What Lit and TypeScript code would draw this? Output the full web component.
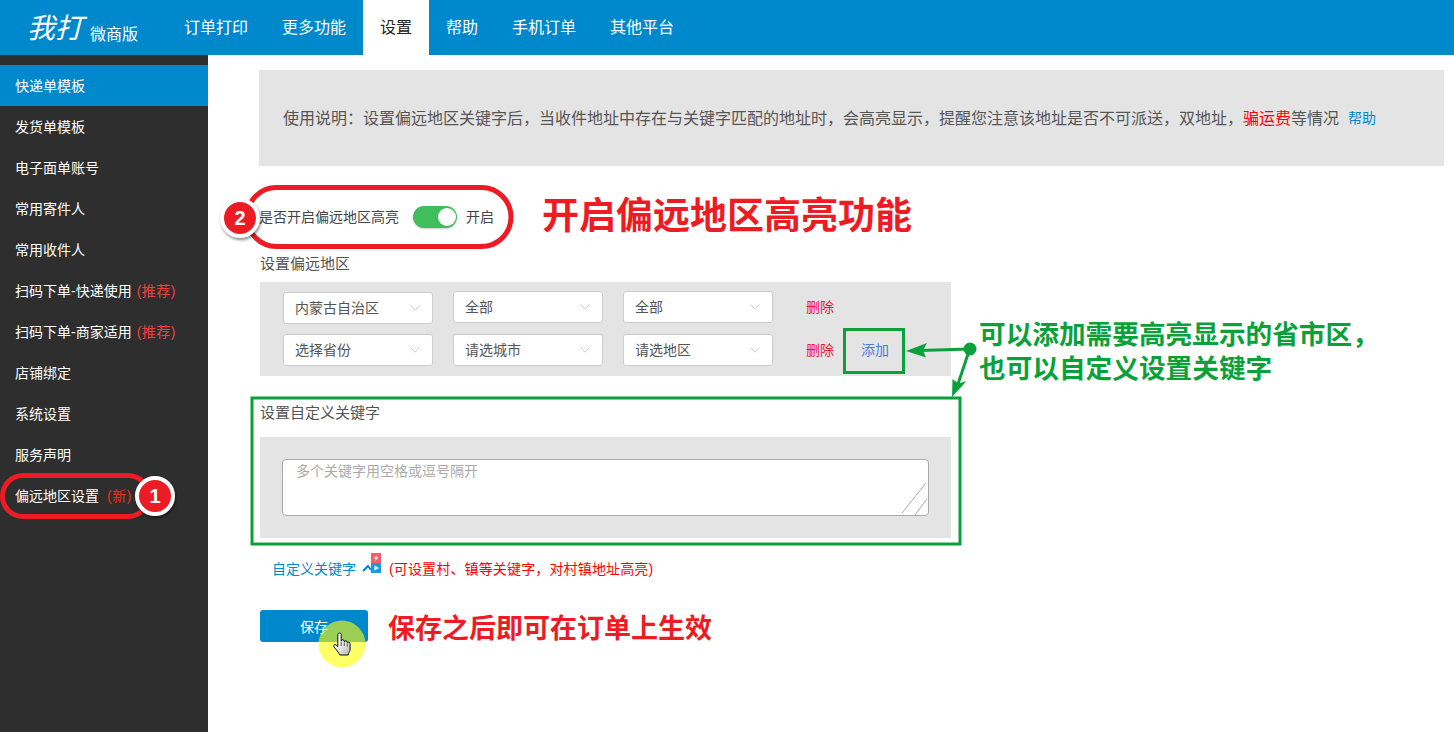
import { LitElement, css, html, svg } from "lit";
import { customElement } from "lit/decorators.js";

const NAV = ["订单打印", "更多功能", "设置", "帮助", "手机订单", "其他平台"];

const MENU = [
  { label: "快递单模板", active: true },
  { label: "发货单模板" },
  { label: "电子面单账号" },
  { label: "常用寄件人" },
  { label: "常用收件人" },
  { label: "扫码下单-快递使用", tag: "(推荐)" },
  { label: "扫码下单-商家适用", tag: "(推荐)" },
  { label: "店铺绑定" },
  { label: "系统设置" },
  { label: "服务声明" },
  { label: "偏远地区设置", isNew: "(新)" },
];

// full-width punctuation, the reference text uses these cells
const NOTICE_HEAD =
  "使用说明\uFF1A设置偏远地区关键字后\uFF0C当收件地址中存在与关键字匹配的地址时\uFF0C会高亮显示\uFF0C提醒您注意该地址是否不可派送\uFF0C双地址\uFF0C";
const RANGE_HINT = "(可设置村、镇等关键字\uFF0C对村镇地址高亮)";
const GREEN_LINE = "可以添加需要高亮显示的省市区\uFF0C";

const chevron = html`<svg class="chevron" width="10" height="6" viewBox="0 0 10 6">
  <path d="M0.5 0.5 L5 5.2 L9.5 0.5" fill="none" stroke="#ccc" stroke-width="1" />
</svg>`;

const marks = svg`
  <rect x="2.5" y="475.5" width="146" height="41" rx="20.5" fill="none" stroke="#ed1c24" stroke-width="5" />
  <rect x="247" y="187.5" width="264" height="59" rx="29.5" fill="none" stroke="#ed1c24" stroke-width="5" />
  <rect x="844.5" y="329.5" width="59" height="43" fill="none" stroke="#0ba13a" stroke-width="3" />
  <rect x="252" y="398" width="708" height="146" fill="none" stroke="#0ba13a" stroke-width="3" />
  <circle cx="970" cy="349" r="6.5" fill="#0ba13a" />
  <line x1="970" y1="349" x2="920" y2="350.5" stroke="#0ba13a" stroke-width="3" />
  <path d="M906 351 L927 343 L923 350.5 L926 357.5 Z" fill="#0ba13a" />
  <line x1="968" y1="354" x2="958" y2="384" stroke="#0ba13a" stroke-width="3" />
  <path d="M952 397 L952.5 379 L958.5 383.5 L966.5 381 Z" fill="#0ba13a" />
  <circle cx="342" cy="644" r="23.5" fill="rgba(255,255,0,0.6)" />
  <defs>
    <linearGradient id="hand" x1="0" y1="0" x2="1" y2="1">
      <stop offset="0.3" stop-color="#fff" />
      <stop offset="1" stop-color="#b5b5b5" />
    </linearGradient>
  </defs>
  <path
    d="M337.8 635c0-2.6 3.4-2.6 3.4 0v6.2c.2-1.9 3-1.9 3.1 0v.8c.3-1.7 2.9-1.6 3 .2v.8c.4-1.4 2.8-1.1 2.8.7v5.3c0 2-.8 3-1.6 4.5l-.3 1.5h-8.4l-.8-1.5c-1.5-2.5-3.4-4.7-5-6.6-1.2-1.5.6-3 2-2l1.8 1.6z"
    fill="url(#hand)"
    stroke="#111"
    stroke-width="1"
  />
  <path d="M341.2 642v4M344.3 642.5v3.5M347.3 643.5v3" stroke="#333" stroke-width="0.8" fill="none" />
`;

@customElement("app-root")
export class AppRoot extends LitElement {
  static styles = css`
    :host {
      display: block;
      position: relative;
      width: 1454px;
      height: 732px;
      overflow: hidden;
      background: #fff;
      color: #555;
      font-family: "Liberation Sans", "Noto Sans CJK SC", sans-serif;
      font-size: 14px;
      line-height: 20px;
    }

    .top {
      display: flex;
      height: 55px;
      background: #0088cc;
      color: #fff;
    }
    .logo {
      display: flex;
      align-items: flex-start;
      width: 140px;
      padding: 10px 0 0 27px;
    }
    .logo b {
      margin-top: 1px;
      font-size: 28px;
      line-height: 36px;
      font-weight: 400;
      font-style: italic;
    }
    .logo span {
      margin: 15px 0 0 7px;
      font-size: 16px;
    }
    .top a {
      padding: 0 17px;
      font-size: 16px;
      line-height: 55px;
    }
    .top a.on {
      background: #fff;
      color: #222;
    }

    .body {
      display: flex;
      height: 677px;
    }
    .side {
      flex: none;
      width: 208px;
      padding-top: 10px;
      box-sizing: border-box;
      background: #2e2e2e;
      color: #fff;
    }
    .side div {
      height: 40px;
      padding: 1px 0 0 15px;
      line-height: 41px;
      white-space: nowrap;
    }
    .side div.on {
      background: #0088cc;
    }
    .side .tag {
      margin-left: 5px;
      color: #ee4040;
      letter-spacing: 0.5px;
    }
    .side .new {
      margin-left: 8px;
      color: #e8301c;
      letter-spacing: 0.6px;
    }

    .main {
      flex: 1;
      padding: 15px 10px 0 52px;
    }
    .notice {
      display: flex;
      align-items: center;
      height: 94px;
      margin-left: -1px;
      padding: 2px 0 0 24px;
      background: #e4e4e4;
      font-size: 16px;
      white-space: nowrap;
    }
    .notice em {
      font-style: normal;
      color: #f00;
    }
    .notice a {
      margin: -2px 0 0 9px;
      color: #0088cc;
      font-size: 14px;
    }

    .switch-row {
      display: flex;
      align-items: center;
      height: 32px;
      margin: 35px 0 0 -1px;
      color: #444;
    }
    .switch {
      position: relative;
      width: 44px;
      height: 22px;
      margin: 0 9px 0 14px;
      border-radius: 11px;
      background: #40be5c;
      box-shadow: 0 1px 2px rgba(0, 0, 0, 0.2);
    }
    .switch i {
      position: absolute;
      top: 2px;
      right: 1px;
      width: 18px;
      height: 18px;
      border-radius: 50%;
      background: #fff;
    }

    .heading {
      font-size: 15px;
    }
    .h1 {
      margin-top: 21px;
    }
    .h2 {
      margin-top: 27px;
    }

    .regions {
      display: flex;
      flex-direction: column;
      gap: 11px;
      width: 691px;
      height: 94px;
      margin-top: 8px;
      padding: 9px 0 0 23px;
      box-sizing: border-box;
      background: #e4e4e4;
    }
    .region {
      display: flex;
      align-items: flex-start;
      gap: 20px;
      height: 32px;
    }
    .select {
      display: flex;
      align-items: center;
      justify-content: space-between;
      width: 150px;
      height: 32px;
      padding: 0 12px 0 11px;
      box-sizing: border-box;
      border: 1px solid #ccc;
      border-radius: 3px;
      background: #fff;
    }
    .select.low {
      margin-top: 1px;
    }
    .chevron {
      flex: none;
    }
    .del {
      align-self: center;
      margin-left: 13px;
      color: #f0103c;
    }
    .add {
      align-self: center;
      margin-left: 7px;
      color: #4a80d4;
    }

    .keywords {
      width: 691px;
      height: 101px;
      margin-top: 14px;
      padding: 22px 22px 0;
      box-sizing: border-box;
      background: #e4e4e4;
    }
    .area {
      position: relative;
      height: 57px;
    }
    textarea {
      display: block;
      width: 100%;
      height: 100%;
      padding: 1px 13px;
      box-sizing: border-box;
      border: 1px solid #aaa;
      border-radius: 4px;
      background: #fff;
      color: #555;
      font: inherit;
      resize: none;
      outline: none;
    }
    textarea::placeholder {
      color: #aaa;
    }
    .grip {
      position: absolute;
      right: 0;
      bottom: 0;
    }

    .link-row {
      display: flex;
      align-items: center;
      height: 20px;
      margin-top: 21px;
      padding-left: 12px;
      white-space: nowrap;
    }
    .link-row a {
      color: #0088cc;
    }
    .link-row svg {
      flex: none;
      margin: -12px 7px 0 6px;
    }
    .link-row span {
      color: #f00;
      letter-spacing: 0.15px;
    }

    .save-row {
      display: flex;
      align-items: flex-start;
      margin-top: 31px;
    }
    .save {
      width: 108px;
      height: 31px;
      padding-top: 1px;
      border-radius: 3px;
      background: #0088cc;
      color: #fff;
      text-align: center;
      line-height: 32px;
    }
    .save-row strong {
      margin-left: 20px;
      color: #ed1c24;
      font-size: 27px;
      line-height: 38px;
      white-space: nowrap;
    }

    .marks {
      position: absolute;
      top: 0;
      left: 0;
      pointer-events: none;
    }
    .badge {
      position: absolute;
      width: 32px;
      height: 32px;
      border: 4px solid #fff;
      border-radius: 50%;
      background: #ed1c24;
      color: #fff;
      box-shadow: 1px 2px 3px rgba(0, 0, 0, 0.45);
      font-size: 20px;
      font-weight: 700;
      line-height: 32px;
      text-align: center;
    }
    .b1 {
      left: 135px;
      top: 476px;
    }
    .b2 {
      left: 220px;
      top: 198px;
    }
    .note {
      position: absolute;
      font-weight: 700;
      white-space: nowrap;
    }
    .note-red {
      left: 542px;
      top: 194px;
      color: #ed1c24;
      font-size: 37px;
      line-height: 46px;
    }
    .note-green {
      left: 979px;
      top: 318px;
      color: #0ba13a;
      font-size: 26.67px;
      line-height: 34px;
    }
  `;

  render() {
    return html`
      <header class="top">
        <div class="logo"><b>我打</b><span>微商版</span></div>
        ${NAV.map((n) => html`<a class=${n === "设置" ? "on" : ""}>${n}</a>`)}
      </header>
      <div class="body">
        <nav class="side">
          ${MENU.map(
            (m) => html`<div class=${m.active ? "on" : ""}>
              ${m.label}${m.tag ? html`<span class="tag">${m.tag}</span>` : ""}${m.isNew
                ? html`<span class="new">${m.isNew}</span>`
                : ""}
            </div>`
          )}
        </nav>
        <main class="main">
          <div class="notice">
            ${NOTICE_HEAD}<em>骗运费</em>等情况
            <a>帮助</a>
          </div>

          <div class="switch-row">
            是否开启偏远地区高亮
            <div class="switch"><i></i></div>
            开启
          </div>

          <div class="heading h1">设置偏远地区</div>
          <div class="regions">
            <div class="region">
              <div class="select low">内蒙古自治区${chevron}</div>
              <div class="select">全部${chevron}</div>
              <div class="select">全部${chevron}</div>
              <a class="del">删除</a>
            </div>
            <div class="region">
              <div class="select">选择省份${chevron}</div>
              <div class="select">请选城市${chevron}</div>
              <div class="select">请选地区${chevron}</div>
              <a class="del">删除</a>
              <a class="add">添加</a>
            </div>
          </div>

          <div class="heading h2">设置自定义关键字</div>
          <div class="keywords">
            <div class="area">
              <textarea placeholder="多个关键字用空格或逗号隔开"></textarea>
              <svg class="grip" width="28" height="34" viewBox="0 0 28 34">
                <path d="M1 31 L25 1 M14 33 L26 17" stroke="#aaa" stroke-width="1" fill="none" />
              </svg>
            </div>
          </div>

          <div class="link-row">
            <a>自定义关键字</a>
            <svg width="20" height="21" viewBox="0 0 20 21">
              <path d="M1 18 L6 13 L9 17" fill="none" stroke="#0088cc" stroke-width="2" />
              <rect x="9" y="0" width="10" height="10" fill="#f0606a" />
              <path d="M15.5 2 L11.5 5.5 H14 L12.5 8.5 L16.5 4.5 H14 Z" fill="#fff" />
              <rect x="9" y="10" width="10" height="10" fill="#1a9be0" />
              <path d="M12.5 12.5 L17 15 L12.5 17.5 Z" fill="#fff" />
            </svg>
            <span>${RANGE_HINT}</span>
          </div>

          <div class="save-row">
            <div class="save">保存</div>
            <strong>保存之后即可在订单上生效</strong>
          </div>
        </main>
      </div>

      <svg class="marks" width="1454" height="732" viewBox="0 0 1454 732">${marks}</svg>
      <div class="badge b1">1</div>
      <div class="badge b2">2</div>
      <div class="note note-red">开启偏远地区高亮功能</div>
      <div class="note note-green">${GREEN_LINE}<br />也可以自定义设置关键字</div>
    `;
  }
}
